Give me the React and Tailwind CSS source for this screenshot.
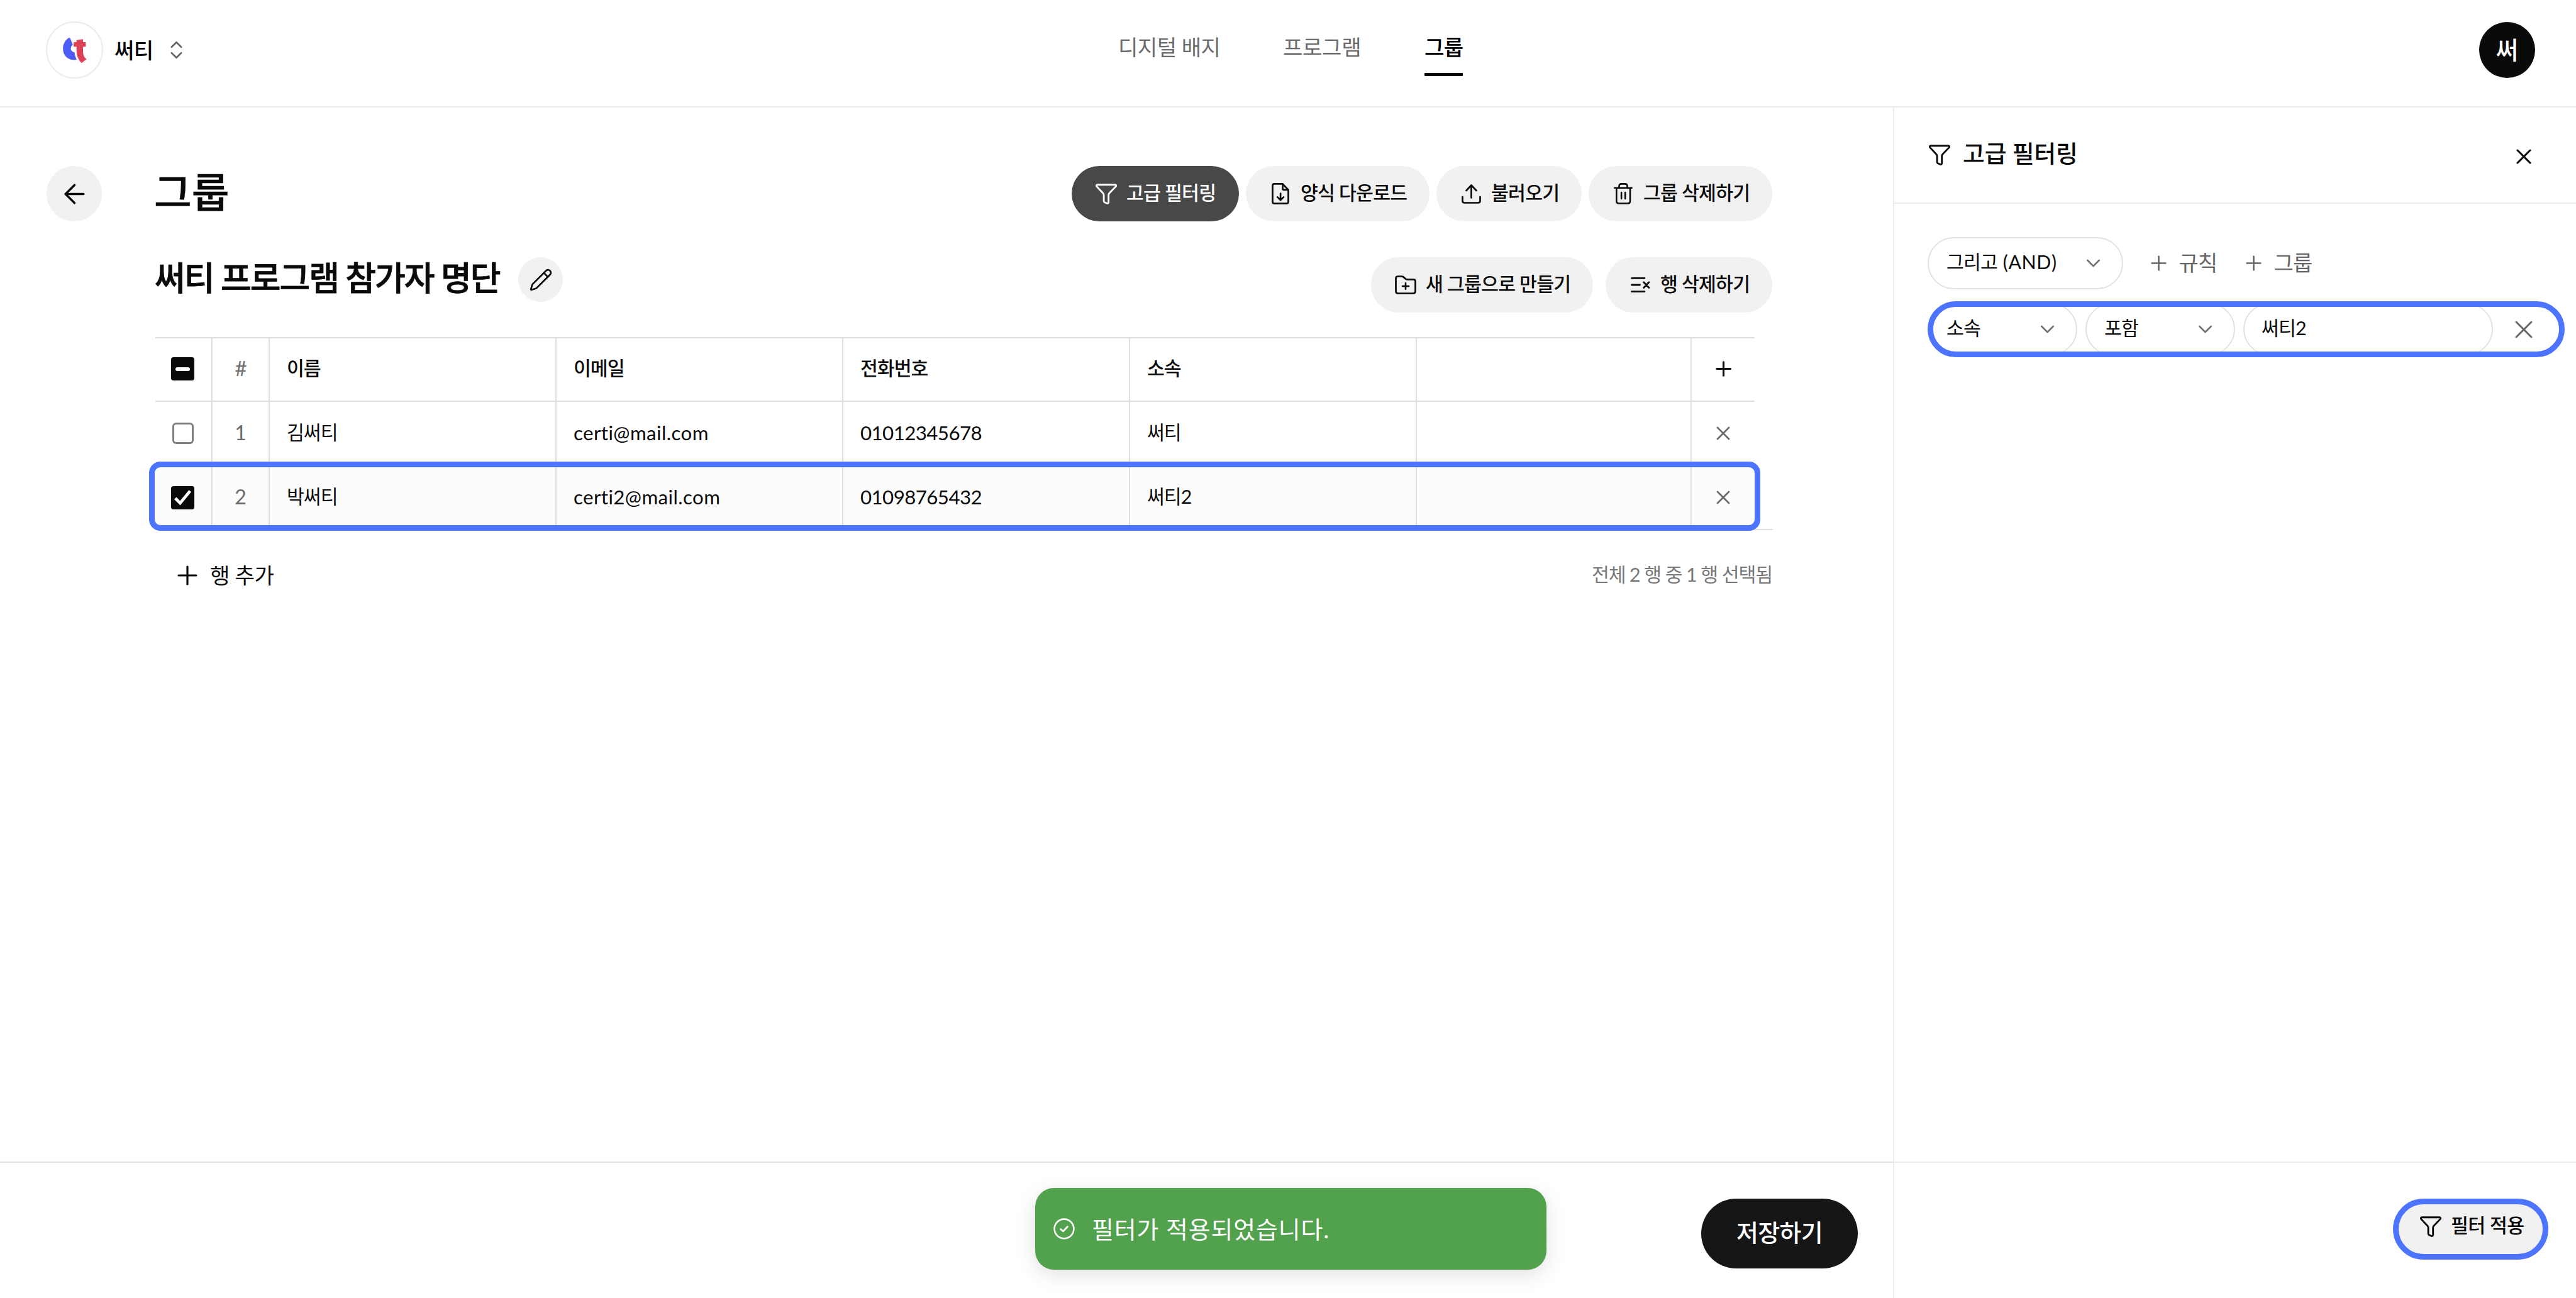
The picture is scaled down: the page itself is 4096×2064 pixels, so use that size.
import { useState } from "react";
import { ArrowLeft, ChevronDown, ChevronsUpDown, Pencil, Plus, X } from "lucide-react";
import clsx from "clsx";

const FilterIcon = ({ className }) => (
  <svg viewBox="0 0 143 138" className={className} fill="none" stroke="currentColor" strokeWidth="12" strokeLinejoin="round">
    <path d="M14 7H129Q142 9 135 19L92 64Q87 69 87 76V124Q86 134 77 132L61 125Q55 121 55 115V76Q55 69 50 64L8 19Q1 9 14 7Z" />
  </svg>
);

const FileDownIcon = () => (
  <svg viewBox="0 0 115 140" className="h-[34px] w-[28px]" fill="none" stroke="currentColor" strokeWidth="11" strokeLinecap="round" strokeLinejoin="round">
    <path d="M18 6H72L109 45V122Q109 134 97 134H18Q6 134 6 122V18Q6 6 18 6Z" />
    <path d="M72 8V37Q72 45 80 45H107M58 68V112M38 92L58 112L78 92" />
  </svg>
);

const UploadIcon = () => (
  <svg viewBox="0 0 31 31" className="h-[31px] w-[31px]" fill="none" stroke="currentColor" strokeWidth="2.7" strokeLinecap="round" strokeLinejoin="round">
    <path d="M15.5 1.5V21.5M7.5 10L15.5 1.5L23.5 10M1.5 20V26.5Q1.5 29.5 5 29.5H26Q29.5 29.5 29.5 26.5V20" />
  </svg>
);

const TrashIcon = () => (
  <svg viewBox="0 0 30 34" className="h-[34px] w-[30px]" fill="none" stroke="currentColor" strokeWidth="2.6" strokeLinecap="round" strokeLinejoin="round">
    <path d="M1.4 7.8H28.6M4.3 8V28.8Q4.3 32.5 8.3 32.5H22Q26 32.5 26 28.8V8M8.5 7.6V5Q8.5 1.4 12.5 1.4H17.5Q21.5 1.4 21.5 5V7.6M12.1 15V25M18.2 15V25" />
  </svg>
);

const FolderPlusIcon = () => (
  <svg viewBox="0 0 34 30" className="h-[30px] w-[34px]" fill="none" stroke="currentColor" strokeWidth="2.7" strokeLinecap="round" strokeLinejoin="round">
    <path d="M1.5 4.5Q1.5 1.5 4.8 1.5H10.8Q12.4 1.5 13.6 2.6L17 5.4Q18 6.3 19.8 6.3H29Q32.5 6.3 32.5 9.3V25Q32.5 28.5 29 28.5H5Q1.5 28.5 1.5 25Z" />
    <path d="M17 12.3V21.7M12 17H22" />
  </svg>
);

const RowsDeleteIcon = () => (
  <svg viewBox="0 0 31 26" className="h-[26px] w-[31px]" fill="none" stroke="currentColor" strokeWidth="2.8" strokeLinecap="round" strokeLinejoin="round">
    <path d="M1.5 2.3H22M1.5 13H14.5M1.5 23.7H22M20.6 8.8L29 17.4M29 8.8L20.6 17.4" />
  </svg>
);

const Logo = () => (
  <svg viewBox="0 0 384 384" className="h-full w-full">
    <path fill="#4d5cf5" d="M159 105C130 115 111 148 111 182C111 230 145 262 188 262Q198 262 207 258Q196 240 192 208C178 207 166 196 166 182Q168 164 180 155Z" />
    <path fill="#dc4158" d="M206 123L252 116V137H271V169H252V212Q254 240 276 257L241 284Q206 248 206 200V169H186V137H206Z" />
  </svg>
);

const PillButton = ({ icon, label, className }) => (
  <button className={clsx("flex h-[88px] items-center rounded-full pl-[37px]", className)}>
    <span className="flex w-[36px] justify-center">{icon}</span>
    <span className="ml-[14px] pb-[3px] text-[30.3px] font-medium tracking-[-0.8px]">{label}</span>
  </button>
);

const Select = ({ label, className }) => (
  <button className={clsx("flex h-[83px] items-center justify-between rounded-full border-2 border-[#e2e2e2] pr-[27px] pl-[28px] text-[30.3px] tracking-[-0.9px]", className)}>
    <span className="pb-[4px]">{label}</span>
    <ChevronDown size={37} strokeWidth={1.8} className="text-[#707070]" />
  </button>
);

const Checkbox = ({ state, onClick }) => {
  if (state === "off") {
    return <button onClick={onClick} className="h-[34px] w-[34px] rounded-[6px] border-[3px] border-[#808080]" />;
  }
  return (
    <button onClick={onClick} className="flex h-[37px] w-[37px] items-center justify-center rounded-[4px] bg-[#0a0a0a]">
      {state === "mixed" ? (
        <span className="h-[6px] w-[23px] rounded-full bg-white" />
      ) : (
        <svg viewBox="0 0 154 154" className="h-full w-full">
          <path d="M28 80L60 112L126 32" fill="none" stroke="#fff" strokeWidth="20" />
        </svg>
      )}
    </button>
  );
};

const GRID = "grid grid-cols-[91px_91px_456px_456px_456px_456px_437px_100px]";
const CELL = "flex items-center border-r-2 border-[#e0e0e0]";

const members = [
  { id: 1, name: "김써티", email: "certi@mail.com", phone: "01012345678", team: "써티" },
  { id: 2, name: "박써티", email: "certi2@mail.com", phone: "01098765432", team: "써티2" },
];

const Header = () => (
  <header className="flex h-[171px] shrink-0 items-center border-b-2 border-[#ececec] pb-[10px] pl-[73px]">
    <div className="h-[91px] w-[91px] rounded-full border-2 border-[#ececec]">
      <Logo />
    </div>
    <span className="ml-[18px] w-[62px] text-[34.2px] font-medium tracking-[-0.6px]">써티</span>
    <ChevronsUpDown size={37} strokeWidth={1.8} className="ml-[18px] text-[#666]" />
    <nav className="ml-[1479px] flex gap-[99px] pb-[9px] text-[34.2px] text-[#6b6b6b]">
      <a className="w-[163px] whitespace-nowrap tracking-[-0.6px]">디지털 배지</a>
      <a className="w-[126px] whitespace-nowrap tracking-[-0.4px]">프로그램</a>
      <a className="relative w-[62px] font-medium whitespace-nowrap tracking-[-0.6px] text-black">
        그룹
        <span className="absolute -bottom-[20px] left-0 h-[5px] w-[61px] rounded-[1px] bg-black" />
      </a>
    </nav>
    <div className="mr-[65px] ml-auto flex h-[89px] w-[89px] items-center justify-center rounded-full bg-[#0a0a0a] text-[39px] font-medium text-white">
      써
    </div>
  </header>
);

const MemberTable = ({ selected, toggle }) => (
  <div className="mt-[38px] w-[2572px] border-b-2 border-[#e0e0e0] text-[30.3px]">
    <div className={clsx(GRID, "h-[103px] w-[2543px] border-y-2 border-[#e0e0e0] font-medium tracking-[-1px]")}>
      <div className={clsx(CELL, "justify-center pr-[2px] pb-[2px]")}>
        <Checkbox state="mixed" />
      </div>
      <div className={clsx(CELL, "justify-center pb-[3px] text-[33px] font-normal text-[#707070]")}>#</div>
      {["이름", "이메일", "전화번호", "소속", ""].map((label, i) => (
        <div key={i} className={clsx(CELL, "pb-[3px] pl-[27px]")}>{label}</div>
      ))}
      <div className="flex items-center justify-center pb-[2px]">
        <Plus size={37} strokeWidth={2} />
      </div>
    </div>
    {members.map((m, i) => {
      const isOn = selected.includes(m.id);
      const isLast = i === members.length - 1;
      return (
        <div
          key={m.id}
          className={clsx(GRID, "relative w-[2543px]", isOn && "bg-[#fcfcfc]", isLast ? "h-[100px]" : "h-[102px] border-b-2 border-[#e0e0e0]")}
        >
          <div className={clsx(CELL, "justify-center pr-[2px]")}>
            <Checkbox state={isOn ? "on" : "off"} onClick={() => toggle(m.id)} />
          </div>
          <div className={clsx(CELL, "justify-center pb-[2px] text-[32px] text-[#6b6b6b]")}>{m.id}</div>
          <div className={clsx(CELL, "pb-[2px] pl-[27px] tracking-[-1px]")}>{m.name}</div>
          <div className={clsx(CELL, "pb-[2px] pl-[27px] text-[31.3px] tracking-[0.4px]")}>{m.email}</div>
          <div className={clsx(CELL, "pb-[2px] pl-[27px] text-[31.3px] tracking-[-0.6px]")}>{m.phone}</div>
          <div className={clsx(CELL, "pb-[2px] pl-[27px] tracking-[-1px]")}>{m.team}</div>
          <div className={CELL} />
          <div className="flex items-center justify-center">
            <X size={36} strokeWidth={1.8} className="text-[#6b6b6b]" />
          </div>
          {isOn && (
            <span className="pointer-events-none absolute -top-[7px] -right-[9px] -bottom-[3px] -left-[10px] rounded-[18px] border-[9px] border-[#4d74ff]" />
          )}
        </div>
      );
    })}
  </div>
);

const FilterPanel = () => (
  <aside className="flex w-[1086px] flex-col border-l-2 border-[#ececec]">
    <div className="flex h-[153px] shrink-0 items-center border-b-2 border-[#ececec] pr-[63px] pl-[55px]">
      <FilterIcon className="h-[33px] w-[34px]" />
      <h3 className="ml-[20px] pb-[4px] text-[37.9px] font-medium tracking-[-0.2px]">고급 필터링</h3>
      <X size={40} strokeWidth={1.8} className="mt-[4px] ml-auto" />
    </div>
    <div className="flex-1 pt-[53px] pl-[53px]">
      <div className="flex items-center">
        <Select label={<>그리고 <span className="ml-[2px] tracking-[0.6px]">(AND)</span></>} className="w-[311px]" />
        <button className="ml-[38px] flex items-center text-[34px] tracking-[-0.8px] text-[#666]">
          <Plus size={37} strokeWidth={1.7} />
          <span className="ml-[13px] w-[62px] pb-[2px]">규칙</span>
        </button>
        <button className="ml-[39px] flex items-center text-[34px] tracking-[-0.8px] text-[#666]">
          <Plus size={37} strokeWidth={1.7} />
          <span className="ml-[13px] w-[62px] pb-[2px]">그룹</span>
        </button>
      </div>
      <div className="relative mt-[22px] flex w-[1013px] items-center">
        <Select label="소속" className="w-[238px]" />
        <Select label="포함" className="ml-[13px] w-[238px]" />
        <div className="ml-[13px] flex h-[83px] w-[397px] items-center rounded-full border-2 border-[#e2e2e2] pb-[4px] pl-[27px] text-[30.3px] tracking-[-0.9px]">
          써티2
        </div>
        <X size={48} strokeWidth={1.5} className="ml-[25px] text-[#666]" />
        <span className="pointer-events-none absolute inset-x-0 -top-[3px] -bottom-[3px] rounded-full border-[9px] border-[#4d74ff]" />
      </div>
    </div>
    <div className="flex h-[217px] shrink-0 items-start justify-end border-t-2 border-[#ececec] pt-[57px] pr-[44px]">
      <button className="flex h-[97px] w-[247px] items-center rounded-full border-[9px] border-[#4d74ff] bg-[#f1f1f1] pb-[9px] pl-[34px]">
        <FilterIcon className="h-[33px] w-[34px]" />
        <span className="ml-[15px] pb-[3px] text-[30.3px] font-medium tracking-[-0.5px]">필터 적용</span>
      </button>
    </div>
  </aside>
);

const Toast = ({ message }) => (
  <div className="absolute top-[1889px] left-[1646px] flex h-[130px] w-[813px] items-center rounded-[30px] bg-[#51a14d] pl-[29px] text-white shadow-[0_8px_32px_rgba(0,0,0,0.12)]">
    <svg viewBox="0 0 34 34" className="h-[34px] w-[34px]" fill="none" stroke="currentColor" strokeWidth="2.6" strokeLinecap="round" strokeLinejoin="round">
      <circle cx="17" cy="17" r="15.4" />
      <path d="M11.5 17.5L15.5 21L22.5 13.5" />
    </svg>
    <span className="ml-[27px] pt-[3px] text-[37.9px] tracking-[0.9px]">{message}</span>
  </div>
);

export default function App() {
  const [selected, setSelected] = useState([2]);
  const toggle = (id) =>
    setSelected((prev) => (prev.includes(id) ? prev.filter((v) => v !== id) : [...prev, id]));

  return (
    <div className="relative flex h-[2064px] w-[4096px] flex-col overflow-hidden bg-white font-['Lato','Noto_Sans_CJK_KR',sans-serif] leading-[1.5] text-[#0a0a0a] [font-variant-ligatures:none]">
      <Header />
      <div className="flex flex-1">
        <div className="flex w-[3010px] flex-col">
          <div className="flex flex-1 pt-[93px] pl-[74px]">
            <button className="flex h-[88px] w-[88px] items-center justify-center rounded-full bg-[#f1f1f1]">
              <ArrowLeft size={49} strokeWidth={1.7} />
            </button>
            <div className="ml-[85px] w-[2571px]">
              <div className="flex h-[88px] items-center justify-between">
                <h1 className="-ml-[2px] pb-[4px] text-[65px] font-medium [-webkit-text-stroke:0.4px]">그룹</h1>
                <div className="flex gap-[11px]">
                  <PillButton icon={<FilterIcon className="h-[33px] w-[34px]" />} label="고급 필터링" className="w-[266px] bg-[#484848] text-white" />
                  <PillButton icon={<FileDownIcon />} label="양식 다운로드" className="w-[292px] bg-[#f1f1f1]" />
                  <PillButton icon={<UploadIcon />} label="불러오기" className="w-[231px] bg-[#f1f1f1]" />
                  <PillButton icon={<TrashIcon />} label="그룹 삭제하기" className="w-[292px] bg-[#f1f1f1]" />
                </div>
              </div>
              <div className="mt-[57px] flex h-[89px] items-start justify-between">
                <div className="flex h-[71px] items-center">
                  <h2 className="-ml-[1px] w-[550px] pb-[5px] text-[53px] font-medium tracking-[-2px] whitespace-nowrap [-webkit-text-stroke:0.8px]">써티 프로그램 참가자 명단</h2>
                  <button className="ml-[28px] flex h-[71px] w-[71px] items-center justify-center rounded-full bg-[#f1f1f1]">
                    <Pencil size={38} strokeWidth={1.7} />
                  </button>
                </div>
                <div className="flex gap-[20px]">
                  <PillButton icon={<FolderPlusIcon />} label="새 그룹으로 만들기" className="w-[353px] bg-[#f1f1f1]" />
                  <PillButton icon={<RowsDeleteIcon />} label="행 삭제하기" className="w-[265px] bg-[#f1f1f1]" />
                </div>
              </div>
              <MemberTable selected={selected} toggle={toggle} />
              <div className="mt-[42px] flex h-[60px] items-center justify-between pl-[27px]">
                <button className="flex items-center text-[34.2px]">
                  <Plus size={48} strokeWidth={1.6} />
                  <span className="ml-[12px] tracking-[-0.4px]">행 추가</span>
                </button>
                <span className="pb-[2px] text-[30.3px] tracking-[-1.1px] text-[#777]">
                  전체 {members.length} 행 중 {selected.length} 행 선택됨
                </span>
              </div>
            </div>
          </div>
          <div className="flex h-[217px] shrink-0 items-start justify-end border-t-2 border-[#e0e0e0] pt-[57px] pr-[56px]">
            <button className="h-[111px] w-[249px] rounded-full bg-[#161616] pb-[2px] text-[37.9px] font-medium tracking-[-0.6px] text-white">저장하기</button>
          </div>
        </div>
        <FilterPanel />
      </div>
      <Toast message="필터가 적용되었습니다." />
    </div>
  );
}
